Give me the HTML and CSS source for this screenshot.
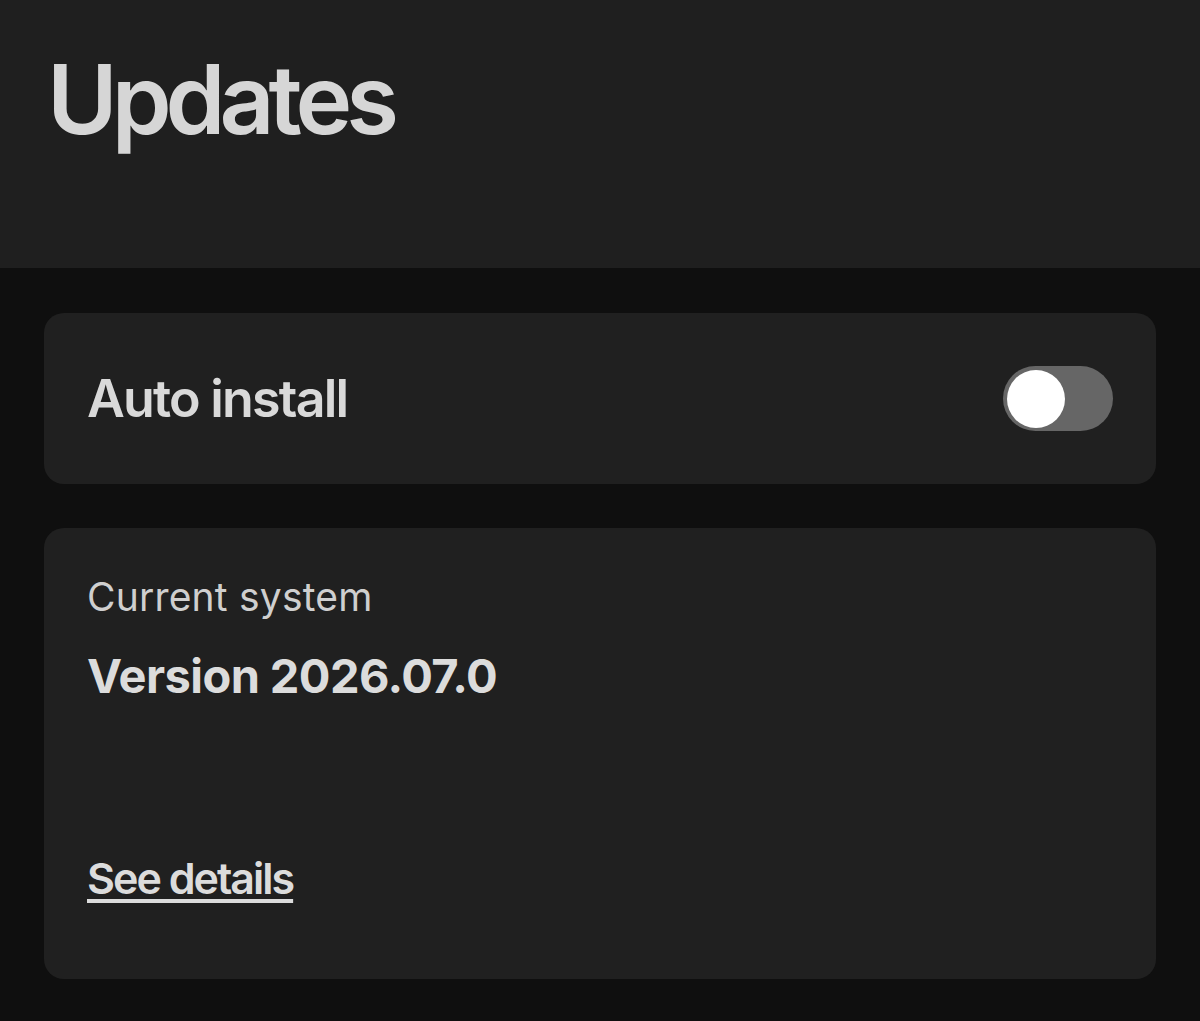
FILE: index.html
```html
<!DOCTYPE html>
<html lang="en">
<head>
<meta charset="utf-8">
<title>Updates</title>
<link rel="stylesheet" href="styles.css">
</head>
<body>
<header class="topbar">
  <h1 class="title">Updates</h1>
</header>
<main class="content">
  <section class="card card-row">
    <span class="row-label">Auto install</span>
    <span class="toggle" role="switch" aria-checked="false"><span class="knob"></span></span>
  </section>
  <section class="card card-info">
    <p class="info-caption">Current system</p>
    <p class="info-version">Version 2026.07.0</p>
    <a class="info-link" href="#">See details</a>
  </section>
</main>
</body>
</html>
```
FILE: styles.css
```css
* { box-sizing: border-box; }
html, body { margin: 0; padding: 0; }
body {
  background: #0f0f0f;
  color: #d9d9d9;
  font-family: Inter, "Noto Sans", "Liberation Sans", sans-serif;
  height: 1021px;
  overflow: hidden;
}
.topbar {
  background: #1f1f1f;
  height: 268px;
  padding: 39px 0 0 47px;
}
.title {
  margin: 0;
  font-size: 96px;
  font-weight: 600;
  letter-spacing: -6px;
  line-height: 120px;
  color: #d6d6d6;
}
.content {
  padding: 45px 44px 0 44px;
  display: flex;
  flex-direction: column;
  gap: 44px;
}
.card {
  background: #202020;
  border-radius: 20px;
}
.card-row {
  height: 171px;
  display: flex;
  align-items: center;
  justify-content: space-between;
  padding: 0 43px 0 43px;
}
.row-label {
  font-size: 52px;
  font-weight: 600;
  letter-spacing: -1.8px;
  color: #d9d9d9;
}
.toggle {
  width: 110px;
  height: 65px;
  border-radius: 33px;
  background: #666666;
  display: flex;
  align-items: center;
  padding-left: 4px;
}
.knob {
  width: 58px;
  height: 58px;
  border-radius: 50%;
  background: #ffffff;
}
.card-info {
  height: 451px;
  padding: 44px 44px 0 43px;
  display: flex;
  flex-direction: column;
}
.info-caption {
  margin: 0;
  font-size: 39px;
  font-weight: 400;
  line-height: 50px;
  letter-spacing: 0.2px;
  color: #cfcfcf;
}
.info-version {
  margin: 24px 0 0 0;
  font-size: 47px;
  font-weight: 700;
  line-height: 60px;
  letter-spacing: -0.6px;
  color: #dcdcdc;
}
.info-link {
  margin-top: 144px;
  align-self: flex-start;
  font-size: 43px;
  font-weight: 600;
  line-height: 56px;
  letter-spacing: -2px;
  color: #dcdcdc;
  text-decoration: underline;
  text-decoration-thickness: 4px;
  text-underline-offset: 5px;
}
```
